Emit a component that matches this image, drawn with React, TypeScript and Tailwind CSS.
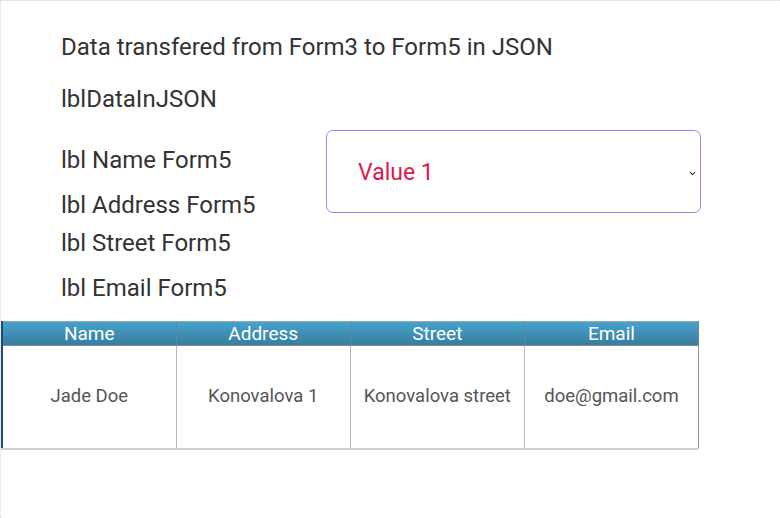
import { ChevronDown } from 'lucide-react'

const rows = [
  { name: 'Jade Doe', address: 'Konovalova 1', street: 'Konovalova street', email: 'doe@gmail.com' },
]

export default function App() {
  return (
    <div className="w-[780px] h-[518px] bg-white overflow-hidden border-t border-dotted border-t-[#cfcfcf] border-l border-l-[#d9d9d9] text-[#333] font-['Roboto',sans-serif]">
      <div className="pl-[60px] pt-[32px]">
        <div className="text-[24px] leading-[28px]">Data transfered from Form3 to Form5 in JSON</div>
        <div className="text-[24px] leading-[28px] mt-[24px]">lblDataInJSON</div>
        <div className="flex mt-[17px]">
          <div className="w-[265px] text-[24px] leading-[28px]">
            <div className="mt-[16px]">lbl Name Form5</div>
            <div className="mt-[17px]">lbl Address Form5</div>
            <div className="mt-[10px]">lbl Street Form5</div>
            <div className="mt-[17px]">lbl Email Form5</div>
          </div>
          <div className="relative w-[375px] h-[83px] border border-[#8a8cf5] rounded-[7px] flex items-center pl-[31px] pt-[3px]">
            <span className="text-[23px] text-[#e0194a]">Value 1</span>
            <ChevronDown className="absolute right-[3px] top-[38px] w-[9px] h-[9px] text-[#333]" strokeWidth={3} />
          </div>
        </div>
      </div>
      <table className="mt-[19px] w-[698px] border-collapse table-fixed">
        <thead>
          <tr className="bg-gradient-to-b from-[#45a3cc] to-[#387b9c] text-white text-[19px]">
            {['Name', 'Address', 'Street', 'Email'].map((h) => (
              <th key={h} className="h-[24px] font-normal leading-[22px] border-x border-x-[#5d8aa3] border-t border-t-[#9aa5ad] border-b border-b-[#7e8c96] first:border-l-2 first:border-l-[#1d4a7a]">
                {h}
              </th>
            ))}
          </tr>
        </thead>
        <tbody>
          {rows.map((r) => (
            <tr key={r.name} className="text-[#555] text-[18.5px]">
              {[r.name, r.address, r.street, r.email].map((c, i) => (
                <td key={i} className="h-[103px] text-center border-x border-x-[#b5b9bd] border-b-2 border-b-[#c9d3dd] first:border-l-2 first:border-l-[#1d4a7a] last:border-r-[#7d95ad]">
                  {c}
                </td>
              ))}
            </tr>
          ))}
        </tbody>
      </table>
    </div>
  )
}
